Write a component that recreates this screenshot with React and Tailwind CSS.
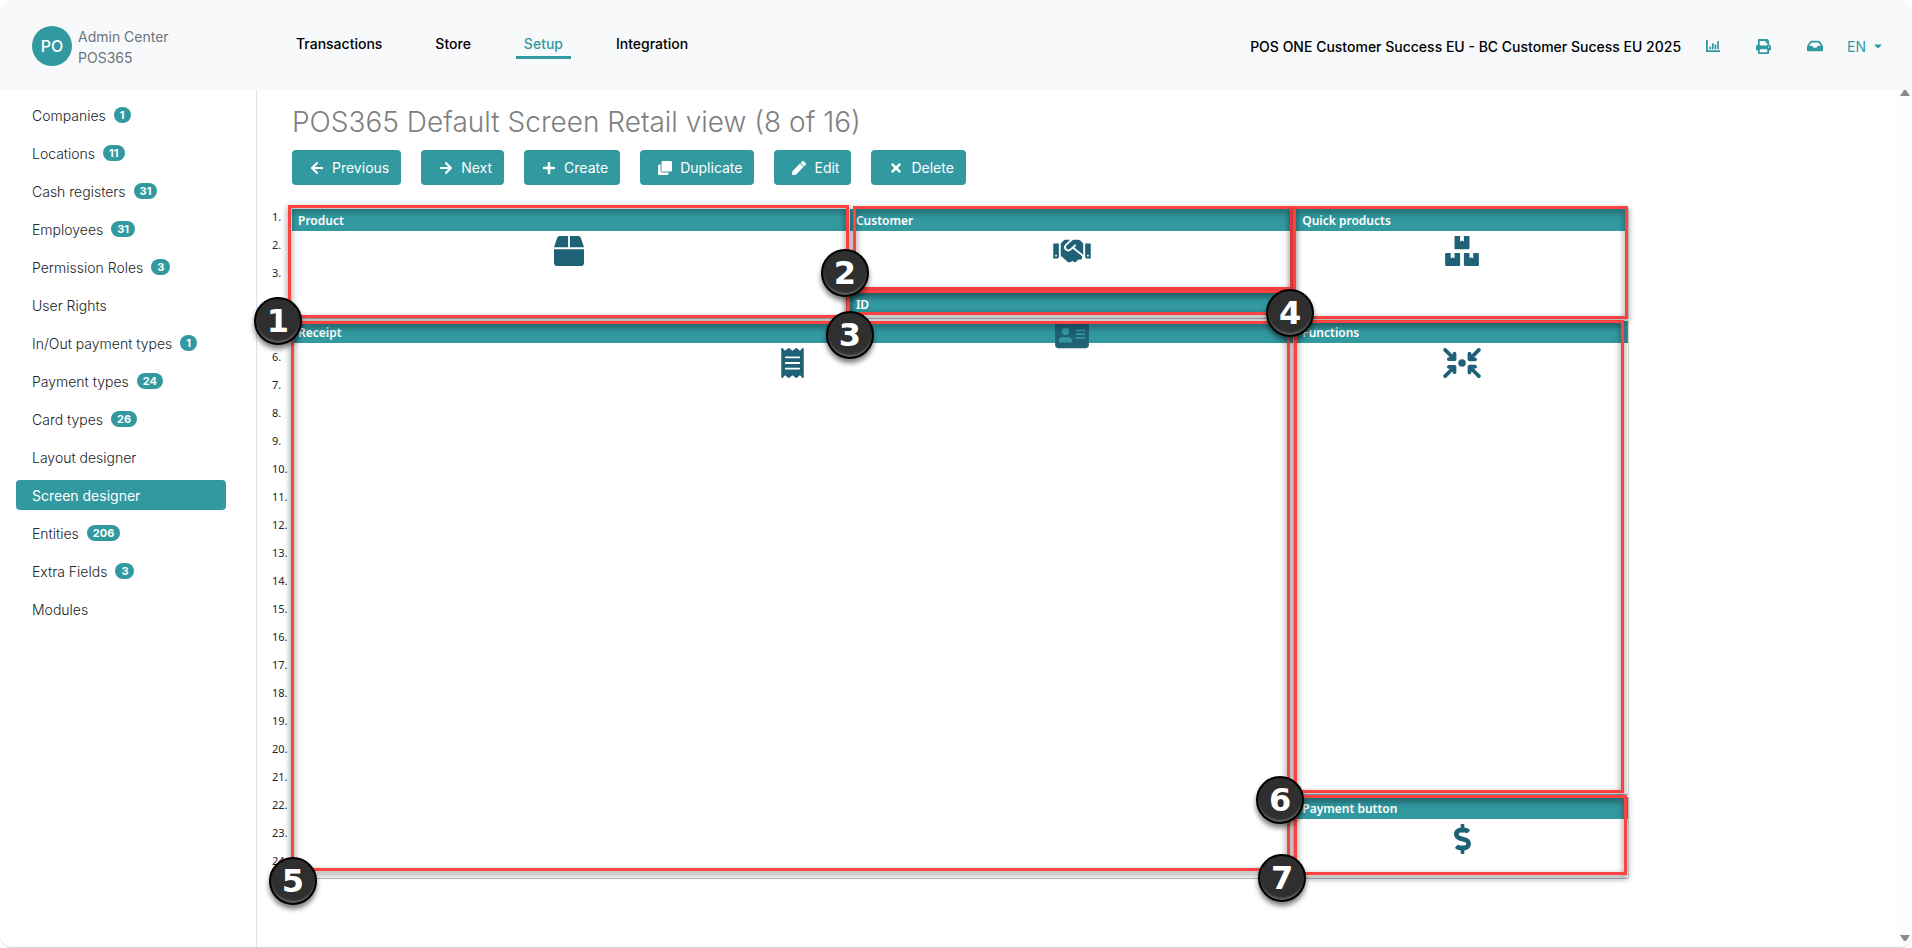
import React from "react";
import {
  FaArrowLeft, FaArrowRight, FaPlus, FaClone, FaPen, FaTimes, FaInbox, FaCaretDown,
  FaBox, FaBoxes, FaReceipt, FaHandshake, FaAddressCard, FaDollarSign, FaPrint,
} from "react-icons/fa";
import { FaArrowsToCircle } from "react-icons/fa6";

const menu = [
  ["Companies", 1], ["Locations", 11], ["Cash registers", 31], ["Employees", 31],
  ["Permission Roles", 3], ["User Rights"], ["In/Out payment types", 1],
  ["Payment types", 24], ["Card types", 26], ["Layout designer"],
  ["Screen designer"], ["Entities", 206], ["Extra Fields", 3], ["Modules"],
];

const nav = ["Transactions", "Store", "Setup", "Integration"];

const actions = [
  ["Previous", FaArrowLeft], ["Next", FaArrowRight], ["Create", FaPlus],
  ["Duplicate", FaClone], ["Edit", FaPen], ["Delete", FaTimes],
];

const panels = [
  {
    n: 1, title: "Product", Icon: FaBox, iconWidth: "w-[30px]",
    area: "col-[1/span_10] row-[1/span_4]",
    frame: "-top-1 -left-1 -right-0.5 bottom-0",
    badge: "-left-[38px] bottom-[-27px]",
  },
  {
    n: 2, title: "Customer", Icon: FaHandshake, iconWidth: "w-[38px]",
    area: "col-[11/span_8] row-[1/span_3]",
    frame: "-top-[3px] left-[3px] right-0 bottom-0",
    badge: "-left-[29px] -bottom-[7px]",
  },
  {
    n: 3, title: "ID", Icon: FaAddressCard, iconWidth: "w-[34px]",
    area: "col-[11/span_8] row-[4/span_1]",
    frame: "-top-[3px] -left-[3px] right-0 bottom-[3px]",
    badge: "-left-6 top-[18px]",
  },
  {
    n: 4, title: "Quick products", Icon: FaBoxes, iconWidth: "w-[34px]",
    area: "col-[19/span_6] row-[1/span_4]",
    frame: "-top-[3px] -left-[3px] right-0 -bottom-px",
    badge: "-left-[30px] -bottom-[19px]",
  },
  {
    n: 5, title: "Receipt", Icon: FaReceipt, iconWidth: "w-[23px]",
    area: "col-[1/span_18] row-[5/span_20]",
    frame: "top-0 -left-px right-[3px] bottom-[7px]",
    badge: "-left-[23px] -bottom-[27px]",
  },
  {
    n: 6, title: "Functions", Icon: FaArrowsToCircle, iconWidth: "w-[38px]",
    area: "col-[19/span_6] row-[5/span_17]",
    frame: "-top-px -left-0.5 right-1 bottom-px",
    badge: "-left-10 -bottom-[30px]",
  },
  {
    n: 7, title: "Payment button", Icon: FaDollarSign, iconWidth: "w-[19px]",
    area: "col-[19/span_6] row-[22/span_3]",
    frame: "-top-0.5 -left-0.5 right-px bottom-[3px]",
    badge: "-left-[38px] -bottom-6",
  },
];

function ChartIcon() {
  return (
    <svg viewBox="0 0 16 16" className="size-4" fill="currentColor" aria-hidden="true">
      <path d="M1 2h1.8v10.2H15V14H1zM4.4 8.4h1.7v2.8H4.4zM7 5.2h1.7v6H7zM9.6 6.6h1.7v4.6H9.6zM12.2 3h1.7v8.2h-1.7z" />
    </svg>
  );
}

function Panel({ n, title, Icon, iconWidth, area, frame, badge }) {
  return (
    <section className={`relative bg-white shadow-[0_1px_0_#b4bac2,1px_0_0_#dcdcdc] ${area}`}>
      <h2 className="h-[22px] bg-[#3299a0] pl-1.5 font-['Noto_Sans',sans-serif] text-[12px] leading-6 font-semibold text-white">
        {title}
      </h2>
      <div className="relative z-[5] flex justify-center pt-[5px]">
        <Icon className={`h-[30px] text-[#1f6176] ${iconWidth}`} />
      </div>
      <div className={`pointer-events-none absolute z-10 border-3 border-[#ff4242] drop-shadow-[0_3px_3px_rgba(0,0,0,0.6)] ${frame}`} />
      <span className={`absolute z-20 flex size-12 items-center justify-center rounded-full border-2 border-black bg-[#2f2f2f] font-['DejaVu_Sans',sans-serif] text-[32px] leading-none font-bold text-white shadow-[0_4px_5px_rgba(0,0,0,0.5),inset_0_-3px_2px_-1px_#666] ${badge}`}>
        {n}
      </span>
    </section>
  );
}

export default function App() {
  return (
    <div className="flex h-screen flex-col overflow-hidden rounded-xl border-b border-[#d0d3d8] bg-white font-['Inter',sans-serif] text-[14px] text-[#212529]">
      <header className="flex h-[90px] shrink-0 items-center bg-[#f8f9fb] pl-8 pr-7">
        <a href="#home" className="flex w-[264px] items-center gap-1.5 pt-0.5 text-[#6c757d]">
          <span className="flex size-10 items-center justify-center rounded-full bg-[#3299a0] text-[16px] font-medium text-white">PO</span>
          <span className="pt-0.5 leading-[21px]">Admin Center<br />POS365</span>
        </a>
        <nav className="flex gap-[37px] font-medium text-black">
          {nav.map((t) => (
            <a key={t} href={"#" + t} className={t === "Setup" ? "border-b-3 border-[#3299a0] px-2 leading-6 text-[#3299a0]" : "border-b-3 border-transparent px-2 leading-6 first:pl-0"}>{t}</a>
          ))}
        </nav>
        <div className="ml-auto flex items-center pt-0.5 text-[#3299a0]">
          <span className="mr-6 font-medium text-black">POS ONE Customer Success EU - BC Customer Sucess EU 2025</span>
          <button aria-label="Statistics" className="mr-[35px]"><ChartIcon /></button>
          <button aria-label="Print" className="mr-9"><FaPrint className="size-[15px]" /></button>
          <button aria-label="Inbox" className="mr-6"><FaInbox className="size-4" /></button>
          <button className="flex items-center gap-1.5">EN <FaCaretDown className="size-3" /></button>
        </div>
      </header>
      <div className="flex min-h-0 grow">
        <aside className="w-[257px] shrink-0 border-r border-[#dee2e6] pl-4 pr-[30px] pt-2.5">
          <ul className="flex flex-col gap-2">
            {menu.map(([t, c]) => (
              <li key={t}>
                <a href={"#" + t} className={t === "Screen designer" ? "flex h-[30px] items-center rounded bg-[#3299a0] px-4 text-white" : "flex h-[30px] items-center gap-2 px-4 font-light"}>
                  {t}
                  {c && <span className="rounded-full bg-[#3299a0] px-1.5 text-[11px] leading-4 font-bold text-white">{c}</span>}
                </a>
              </li>
            ))}
          </ul>
        </aside>
        <main className="flex min-w-0 grow flex-col pt-[11px]">
          <h1 className="pl-[35px] text-[28px] leading-[42px] font-light text-[#808080]">POS365 Default Screen Retail view (8 of 16)</h1>
          <div className="mt-[7px] flex gap-5 pl-[35px]">
            {actions.map(([t, Icon]) => (
              <button key={t} className="flex h-[35px] items-center gap-2 rounded bg-[#3299a0] pl-[18px] pr-3 text-white">
                <Icon className="size-3.5" />{t}
              </button>
            ))}
          </div>
          <div className="mt-6 flex pl-[15px]">
            <ol className="w-5 shrink-0 font-['Noto_Sans',sans-serif] text-[11px] leading-4 text-[#212529]">
              {Array.from({ length: 24 }, (_, i) => <li key={i} className="h-7">{i + 1}.</li>)}
            </ol>
            <div className="grid w-full max-w-[1336px] grid-cols-24 grid-rows-[repeat(24,25px)] gap-[3px]">
              {panels.map((p) => <Panel key={p.n} {...p} />)}
            </div>
          </div>
        </main>
        <div className="flex w-[15px] shrink-0 flex-col items-center justify-between bg-[#fcfcfc] pb-1.5 text-[#8b8b8b]">
          <svg viewBox="0 0 10 6" className="w-2.5" fill="currentColor"><path d="M4 0h2l4 6H0z" /></svg>
          <svg viewBox="0 0 10 6" className="w-2.5" fill="currentColor"><path d="M0 0h10L6 6H4z" /></svg>
        </div>
      </div>
    </div>
  );
}
